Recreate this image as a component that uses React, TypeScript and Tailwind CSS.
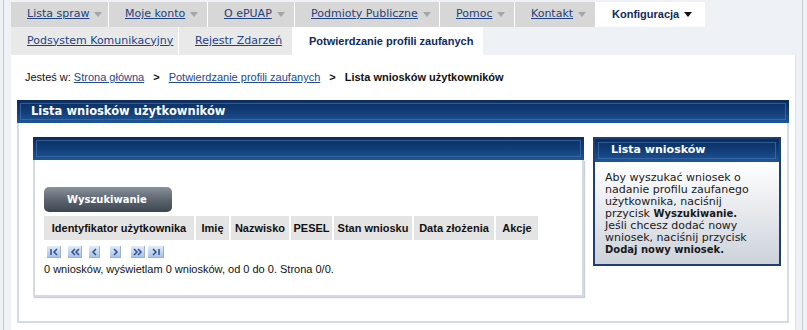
import type { ReactNode } from "react";

function BlueBar({ className, children }: { className: string; children?: ReactNode }) {
  return (
    <div className={`bg-gradient-to-b from-[#0a2d60] via-[#113d78] to-[#1f5697] p-[3px] ${className}`}>
      <div className="flex h-full items-center border border-[#4b78b0]/60">{children}</div>
    </div>
  );
}

function Arrow({ dark }: { dark?: boolean }) {
  return (
    <svg width="8" height="5" viewBox="0 0 8 5" className="ml-[5px]">
      <polygon points="0,0 8,0 4,5" fill={dark ? "#111111" : "#a6a6a6"} />
    </svg>
  );
}

function PageIcon({ width, kind, className }: { width: number; kind: string; className: string }) {
  const c = "#2c4f8e";
  const m = width / 2;
  let shape: ReactNode = null;
  if (kind === "first") {
    shape = (
      <>
        <line x1={4} y1={3} x2={4} y2={9} stroke={c} strokeWidth={1.5} />
        <polyline points="10,3 7,6 10,9" fill="none" stroke={c} strokeWidth={1.5} />
      </>
    );
  } else if (kind === "prevprev") {
    shape = (
      <>
        <polyline points="7,3 4,6 7,9" fill="none" stroke={c} strokeWidth={1.5} />
        <polyline points="11,3 8,6 11,9" fill="none" stroke={c} strokeWidth={1.5} />
      </>
    );
  } else if (kind === "prev") {
    shape = <polyline points={`${m + 1.5},3 ${m - 1.5},6 ${m + 1.5},9`} fill="none" stroke={c} strokeWidth={1.5} />;
  } else if (kind === "next") {
    shape = <polyline points={`${m - 1.5},3 ${m + 1.5},6 ${m - 1.5},9`} fill="none" stroke={c} strokeWidth={1.5} />;
  } else if (kind === "nextnext") {
    shape = (
      <>
        <polyline points="3,3 6,6 3,9" fill="none" stroke={c} strokeWidth={1.5} />
        <polyline points="7,3 10,6 7,9" fill="none" stroke={c} strokeWidth={1.5} />
      </>
    );
  } else {
    shape = (
      <>
        <polyline points="5,3 8,6 5,9" fill="none" stroke={c} strokeWidth={1.5} />
        <line x1={11} y1={3} x2={11} y2={9} stroke={c} strokeWidth={1.5} />
      </>
    );
  }
  return (
    <span
      className={`block h-[12px] border-b border-r border-[#9fb0c8] bg-gradient-to-b from-[#e2ebf8] to-[#a9c2e8] ${className}`}
    >
      <svg width={width - 1} height={11} viewBox={`0 0 ${width - 1} 11`}>
        {shape}
      </svg>
    </span>
  );
}

const topMenu = [
  { label: "Lista spraw", w: "w-[98px]" },
  { label: "Moje konto", w: "w-[99px]" },
  { label: "O ePUAP", w: "w-[87px]" },
  { label: "Podmioty Publiczne", w: "w-[145px]" },
  { label: "Pomoc", w: "w-[75px]" },
  { label: "Kontakt", w: "w-[81px]" },
];

const columns = [
  { label: "Identyfikator użytkownika", w: "w-[150px]" },
  { label: "Imię", w: "w-[33px]" },
  { label: "Nazwisko", w: "w-[58px]" },
  { label: "PESEL", w: "w-[41px]" },
  { label: "Stan wniosku", w: "w-[78px]" },
  { label: "Data złożenia", w: "w-[80px]" },
  { label: "Akcje", w: "w-[42px]" },
];

export default function App() {
  return (
    <div className="min-h-[330px] w-[807px] bg-[#eef1f6] font-['DejaVu_Sans',sans-serif] text-[11px] text-[#111]">
      <div className="ml-[3px] min-h-[330px] w-[800px] border-x border-[#c4c9d0] pl-[7px] pr-[6px] pt-[2px]">
        {/* top menu */}
        <div className="flex h-[25px]">
          {topMenu.map((item) => (
            <div key={item.label} className={`flex items-center border-r border-white bg-[#d7d7d7] pl-4 ${item.w}`}>
              <span className="text-[#1f4282] underline">{item.label}</span>
              <Arrow />
            </div>
          ))}
          <div className="flex w-[109px] items-center bg-white pl-4">
            <span className="font-['Liberation_Sans',sans-serif] font-bold text-[#0f2b5c]">Konfiguracja</span>
            <Arrow dark />
          </div>
        </div>
        <div className="flex h-[28px]">
          <div className="flex w-[168px] items-center border-r border-white bg-[#e9e9e9] pl-4">
            <span className="text-[#1f4282] underline">Podsystem Komunikacyjny</span>
          </div>
          <div className="flex w-[114px] items-center border-r border-white bg-[#e9e9e9] pl-4">
            <span className="text-[#1f4282] underline">Rejestr Zdarzeń</span>
          </div>
          <div className="flex w-[190px] items-center bg-white pl-4">
            <span className="font-['Liberation_Sans',sans-serif] font-bold text-[#0f2b5c]">
              Potwierdzanie profili zaufanych
            </span>
          </div>
        </div>

        {/* content */}
        <div className="min-h-[275px] border-r border-[#dde1e6] bg-white px-[6px]">
          <div className="flex h-[45px] items-center pl-2 font-['Liberation_Sans',sans-serif]">
            <span>Jesteś w:</span>
            <span className="ml-[3px] text-[#214a8f] underline">Strona główna</span>
            <span className="mx-[9px] font-bold">&gt;</span>
            <span className="text-[#214a8f] underline">Potwierdzanie profili zaufanych</span>
            <span className="mx-[9px] font-bold">&gt;</span>
            <span className="font-bold">Lista wniosków użytkowników</span>
          </div>

          <BlueBar className="h-[23px]">
            <span className="pl-[10px] text-[11.5px] font-bold text-white">Lista wniosków użytkowników</span>
          </BlueBar>
          <div className="flex items-start gap-[9px] border-x-2 border-b-2 border-[#d5dbe3] pb-[24px] pl-[14px] pt-[14px]">
            {/* left panel */}
            <div className="w-[551px]">
              <BlueBar className="h-[23px]" />
              <div className="border-x-2 border-b-2 border-[#d3dae3] pb-[19px] pl-[9px] pt-[27px] shadow-[1px_1px_1px_#c9d0da]">
                <div className="flex h-[25px] w-[128px] items-center rounded-[5px] bg-gradient-to-b from-[#8a929c] via-[#5d6671] to-[#3d4550] pl-[23px] text-[10px] font-bold text-white">
                  Wyszukiwanie
                </div>
                <div className="mt-[4px] flex h-[24px] w-fit bg-white font-['Liberation_Sans',sans-serif] font-bold">
                  {columns.map((col, i) => (
                    <div
                      key={col.label}
                      className={`flex items-center justify-center whitespace-nowrap bg-[#e4e4e4] ${col.w} ${i > 0 ? "ml-[2px]" : ""}`}
                    >
                      {col.label}
                    </div>
                  ))}
                </div>
                <div className="mt-[6px] flex h-[13px]">
                  <PageIcon width={14} kind="first" className="ml-[3px] w-[14px]" />
                  <PageIcon width={14} kind="prevprev" className="ml-[7px] w-[14px]" />
                  <PageIcon width={11} kind="prev" className="ml-[7px] w-[11px]" />
                  <PageIcon width={11} kind="next" className="ml-[10px] w-[11px]" />
                  <PageIcon width={14} kind="nextnext" className="ml-[10px] w-[14px]" />
                  <PageIcon width={16} kind="last" className="ml-[3px] w-[16px]" />
                </div>
                <p className="mt-[4px] font-['Liberation_Sans',sans-serif] leading-[13px]">
                  0 wniosków, wyświetlam 0 wniosków, od 0 do 0. Strona 0/0.
                </p>
              </div>
            </div>

            {/* right info box */}
            <div className="w-[188px] border-2 border-[#1d3f71]">
              <BlueBar className="h-[23px]">
                <span className="pl-[12px] text-[11px] font-bold text-white">Lista wniosków</span>
              </BlueBar>
              <div className="bg-gradient-to-b from-white to-[#cdd2da] pb-[8px] pl-[10px] pt-[10px] leading-[12px] text-[#1a1a1a]">
                Aby wyszukać wniosek o<br />
                nadanie profilu zaufanego<br />
                użytkownika, naciśnij<br />
                przycisk <b className="text-[10px]">Wyszukiwanie.</b>
                <br />
                Jeśli chcesz dodać nowy<br />
                wniosek, naciśnij przycisk<br />
                <b className="text-[10px]">Dodaj nowy wniosek.</b>
              </div>
            </div>
          </div>
        </div>
      </div>
    </div>
  );
}
